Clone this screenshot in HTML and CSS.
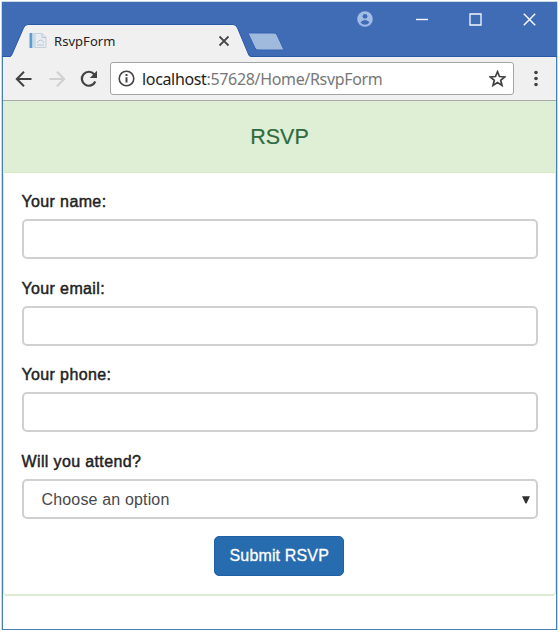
FILE: index.html
```html
<!DOCTYPE html>
<html lang="en">
<head>
<meta charset="utf-8">
<title>RsvpForm</title>
<link rel="stylesheet" href="styles.css">
</head>
<body>
<div class="window">
  <header class="titlebar">
    <div class="tab">
      <svg class="tab-shape" width="242" height="33" viewBox="0 0 242 33"><path d="M0 33L1.500 31.500L13.500 4Q15 .5 18 .5H223Q226 .5 227.500 4L239 31.500L241 33Z" fill="#f0f0f0"/><path d="M0 32.500L1.500 31.500L13.500 4Q15 .5 18 .5H223Q226 .5 227.500 4L239 31.500L241 32.500" fill="none" stroke="#2859a8"/></svg>
      <svg class="favicon" width="18" height="17" viewBox="0 0 18 17"><path d="M.5 1h3v15h-3z" fill="#5b9ed5"/><path d="M3.500 1h2v15h-2z" fill="#c4ddea"/><path d="M6 1.500h7l4 4v10H6z" fill="#e8edf1" stroke="#c4d0d8"/><path d="M13 1.500v4h4M8 11q4-6 7 0M8 13h7" fill="none" stroke="#b8c5ce"/></svg>
      <span class="tab-title">RsvpForm</span>
      <svg class="tab-close" width="12" height="12" viewBox="0 0 12 12"><path d="M1.500 1.500l9 9m0-9l-9 9" stroke="#4a4a4a" stroke-width="1.800"/></svg>
    </div>
    <svg class="new-tab" width="40" height="20" viewBox="0 0 40 20"><path d="M1 1H27Q29 1 30 3L37 18H11Q9 18 8 16Z" fill="#a0bade" stroke="#3565b2"/></svg>
    <div class="controls">
      <svg width="16" height="16" viewBox="0 0 16 16"><circle cx="8" cy="8" r="7.800" fill="#a1bce5"/><circle cx="8" cy="5.300" r="2.400" fill="#406bb5"/><path d="M3.500 11.500Q4.800 9 8 9t4.500 2.500Q10.800 13.800 8 13.800T3.500 11.500Z" fill="#406bb5"/></svg>
      <svg width="12" height="14" viewBox="0 0 12 14"><path d="M0 7.500h12" stroke="#f5f8fc" stroke-width="1.400"/></svg>
      <svg width="13" height="13" viewBox="0 0 13 13"><path d="M1 1h11v11H1z" fill="none" stroke="#f5f8fc" stroke-width="1.300"/></svg>
      <svg width="13" height="13" viewBox="0 0 13 13"><path d="M.8.8l11.400 11.400m0-11.400L.8 12.200" stroke="#f5f8fc" stroke-width="1.500"/></svg>
    </div>
  </header>
  <nav class="toolbar">
    <svg class="back" width="17" height="16" viewBox="0 0 17 16"><path d="M16.500 8H2M9 .8L1.800 8 9 15.200" fill="none" stroke="#424242" stroke-width="2"/></svg>
    <svg class="forward" width="17" height="16" viewBox="0 0 17 16"><path d="M.5 8H15M8 .8L15.200 8 8 15.200" fill="none" stroke="#d0d0d0" stroke-width="2"/></svg>
    <svg class="reload" width="18" height="18" viewBox="0 0 18 18"><path d="M15.300 11.500A7 7 0 1 1 14.200 4.200" fill="none" stroke="#424242" stroke-width="2.200"/><path d="M17 .8V8H9.800Z" fill="#424242"/></svg>
    <div class="address">
      <svg class="info" width="17" height="17" viewBox="0 0 17 17"><circle cx="8.500" cy="8.500" r="7.300" fill="none" stroke="#444" stroke-width="1.600"/><path d="M8.500 7.300v5.200M8.500 4v2" stroke="#444" stroke-width="2"/></svg>
      <span class="url"><span class="host">localhost</span>:57628/Home/RsvpForm</span>
      <svg class="star" width="17" height="17" viewBox="0 0 17 17"><path d="M8.500 1.700l2 4.800 5.200.4-4 3.400 1.300 5.100-4.500-2.800L4 15.400l1.300-5.100-4-3.400 5.200-.4z" fill="none" stroke="#424242" stroke-width="1.700"/></svg>
    </div>
    <svg class="menu" width="4" height="17" viewBox="0 0 4 17"><g fill="#424242"><circle cx="2" cy="2.500" r="1.800"/><circle cx="2" cy="8.500" r="1.800"/><circle cx="2" cy="14.500" r="1.800"/></g></svg>
  </nav>
  <main class="page">
    <form class="panel">
      <h1 class="heading">RSVP</h1>
      <div class="body">
        <div class="group"><label for="name">Your name:</label><input class="control" id="name" type="text"></div>
        <div class="group"><label for="email">Your email:</label><input class="control" id="email" type="text"></div>
        <div class="group"><label for="phone">Your phone:</label><input class="control" id="phone" type="text"></div>
        <div class="group"><label for="attend">Will you attend?</label>
          <div class="control select" id="attend"><span>Choose an option</span><svg width="8" height="8" viewBox="0 0 8 8"><path d="M0 .3h8L4.500 7.500h-1z" fill="#303030"/></svg></div>
        </div>
        <div class="actions"><button class="submit" type="button">Submit RSVP</button></div>
      </div>
    </form>
  </main>
</div>
</body>
</html>
```
FILE: styles.css
```css
* { box-sizing: border-box; }
body { margin: 0; background: #fff; font-family: "Liberation Sans", Arial, sans-serif; }
svg { display: block; flex: none; }
.window { width: 555px; height: 628px; margin: 2px 0 0 2px; border: 1px solid #487fb3; border-width: 0 1px 1px; background: #fff; box-shadow: 0 0 0 .5px #8db5d0; }
.titlebar { display: flex; height: 55px; padding-left: 8px; background: linear-gradient(#406bb5 54px, #2859a8 54px); margin: 0 -1px; }
.tab { display: grid; grid-template-columns: 19px 24px 165px 1fr; align-items: center; width: 242px; height: 33px; margin-top: 22px; }
.tab-shape { grid-area: 1 / 1 / 2 / 5; }
.favicon { grid-area: 1 / 2; }
.tab-title { grid-area: 1 / 3; font: 13px/18px "Noto Sans", sans-serif; letter-spacing: .05px; color: #222; padding-left: 1px; }
.tab-close { grid-area: 1 / 4; }
.new-tab { margin: 30px 0 0 -5px; }
.controls { display: flex; align-items: center; height: 34px; margin-left: auto; padding-right: 21px; }
.controls svg + svg { margin-left: 43px; }
.controls svg + svg + svg { margin-left: 41px; }
.toolbar { display: flex; align-items: center; height: 44px; padding: 0 18px 0 12px; background: #f0f0f0; border-bottom: 1px solid #a8a8a8; }
.forward { margin-left: 17px; }
.reload { margin-left: 14px; }
.address { display: flex; align-items: center; width: 404px; height: 33px; margin-left: 12px; padding: 0 7px; background: #fff; border: 1px solid #a4a4a4; border-radius: 3px; }
.url { font: 16px/24px "Noto Sans", sans-serif; letter-spacing: -.34px; color: #777; margin-left: 7px; padding-top: 1px; white-space: nowrap; }
.host { color: #222; }
.star { margin-left: auto; }
.menu { margin-left: auto; }
.panel { height: 495px; border: 1px solid #dcebd2; border-bottom-width: 2px; border-top: 0; border-radius: 0 0 4px 4px; }
.heading { margin: 0; height: 72px; background: #dfefd5; border-bottom: 1px solid #d6e9c6; color: #2f6b40; font-size: 21.500px; line-height: 72px; font-weight: 400; text-align: center; -webkit-text-stroke: .2px #2f6b40; }
.body { padding: 15px 18px 0 17.500px; }
.group { height: 86.700px; font-size: 16px; }
label { display: block; height: 31px; line-height: 28px; color: #222; letter-spacing: .37px; -webkit-text-stroke: .45px #222; }
.control { display: block; width: 516px; height: 40px; border: 2px solid #d0d0d0; border-radius: 5px; background: #fff; }
.select { display: flex; align-items: center; justify-content: space-between; padding: 1px 6px 0 18px; color: #494949; letter-spacing: .16px; }
.actions { display: flex; justify-content: center; margin-top: 1px; }
.submit { width: 130px; height: 40px; padding: 1px 0 0; border: 1px solid #2160a4; border-radius: 5px; background: #286cb0; color: #fff; font: 16px "Liberation Sans", sans-serif; letter-spacing: .15px; -webkit-text-stroke: .3px #fff; }
```
